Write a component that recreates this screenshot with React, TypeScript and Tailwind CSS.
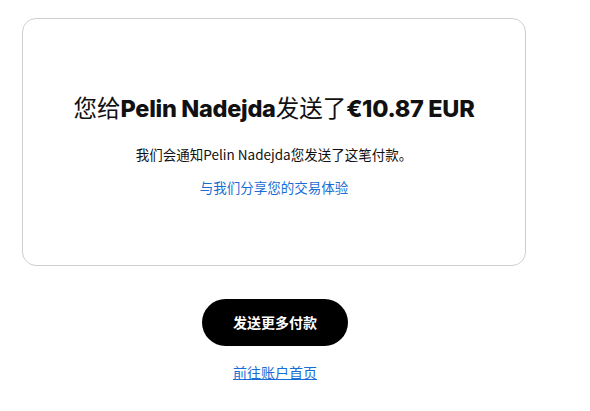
export default function App() {
  return (
    <div className="w-[590px] h-[411px] bg-white font-['Noto_Sans_CJK_SC',sans-serif]">
      <div className="pt-[18px] pl-[22px] w-[526px] flex flex-col items-center">
        <div className="w-[504px] h-[248px] border border-[#cfcfcf] rounded-[14px] flex flex-col items-center pt-[75px]">
          <h1 className="text-[23.5px] leading-[30px] text-[#111] font-['Inter','Noto_Sans_CJK_SC',sans-serif] whitespace-nowrap">
            <span className="font-normal">您给</span>
            <span className="font-extrabold tracking-[-0.3px]">Pelin Nadejda</span>
            <span className="font-normal">发送了</span>
            <span className="font-extrabold tracking-[-0.3px]">€10.87 EUR</span>
          </h1>
          <p className="mt-[20px] text-[13.5px] leading-[20px] text-[#111] whitespace-nowrap">
            我们会通知Pelin Nadejda您发送了这笔付款。
          </p>
          <a className="mt-[13px] text-[13.5px] leading-[20px] text-[#1a6dd4] whitespace-nowrap" href="#">
            与我们分享您的交易体验
          </a>
        </div>
        <button className="mt-[33px] ml-[2px] w-[146px] h-[47px] rounded-full bg-black text-white text-[14px] font-bold">
          发送更多付款
        </button>
        <a className="mt-[16px] ml-[2px] text-[14px] leading-[20px] text-[#1a6dd4] underline whitespace-nowrap" href="#">
          前往账户首页
        </a>
      </div>
    </div>
  );
}
